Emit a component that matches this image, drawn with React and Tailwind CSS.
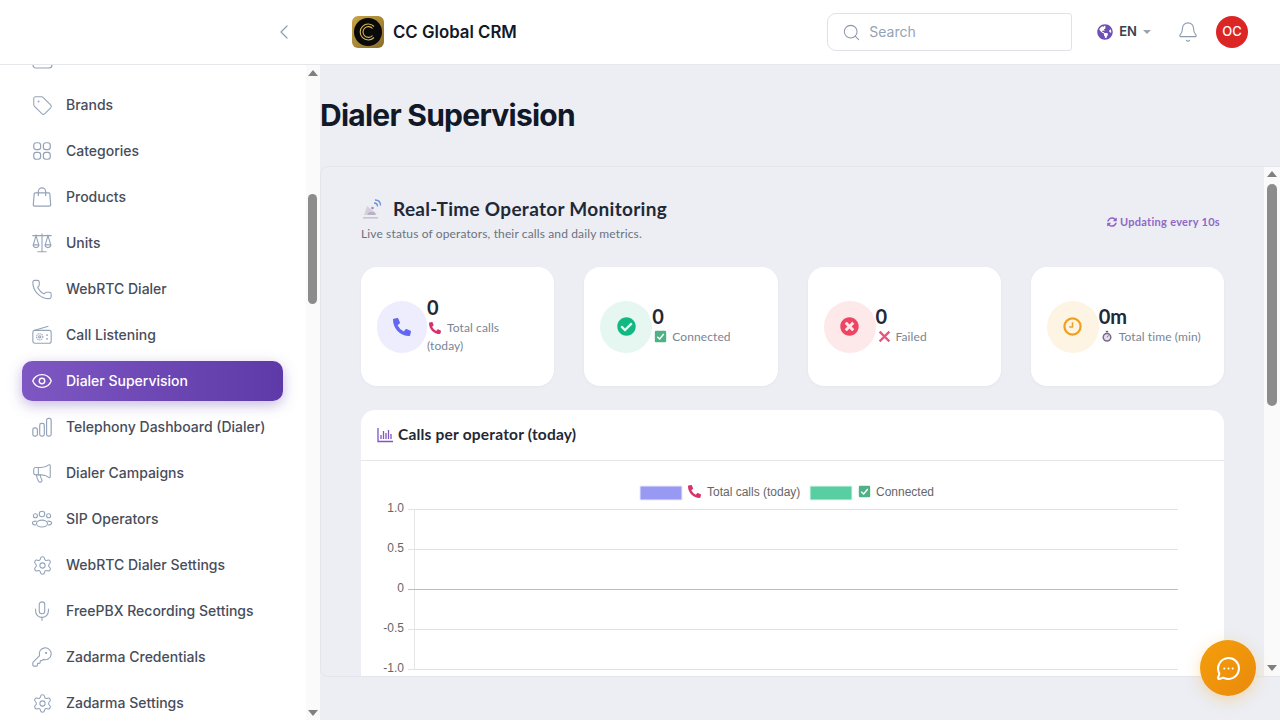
import { Bell, ChevronLeft, Eye, KeyRound, Megaphone, MessageCircleMore, Mic, Phone, Search, Settings, Tag } from 'lucide-react';
import { FaCheckCircle, FaGlobeAmericas, FaPhoneAlt, FaSyncAlt, FaTimesCircle } from 'react-icons/fa';

const sans = 'font-["Inter","Liberation_Sans",sans-serif]';

function GridIcon(props) {
  return (
    <svg viewBox="0 0 24 24" fill="none" stroke="currentColor" strokeWidth="1.3" {...props}>
      <rect x="3" y="3" width="7.5" height="7.5" rx="2.6" />
      <rect x="13.5" y="3" width="7.5" height="7.5" rx="2.6" />
      <rect x="3" y="13.5" width="7.5" height="7.5" rx="2.6" />
      <rect x="13.5" y="13.5" width="7.5" height="7.5" rx="2.6" />
    </svg>
  );
}

function BagIcon(props) {
  return (
    <svg viewBox="0 0 24 24" fill="none" stroke="currentColor" strokeWidth="1.3" {...props}>
      <path d="M4.5 7.5h15a1 1 0 0 1 1 1l1 12a1.5 1.5 0 0 1-1.5 1.5H4a1.5 1.5 0 0 1-1.5-1.5l1-12a1 1 0 0 1 1-1Z" />
      <path d="M8 11V6a4 4 0 0 1 8 0v5" />
    </svg>
  );
}

function BalanceIcon(props) {
  return (
    <svg viewBox="0 0 24 24" fill="none" stroke="currentColor" strokeWidth="1.2" {...props}>
      <path d="M1.5 4h21M12 1.5v20M7 21.5h10" />
      <path d="M5.5 4 2.5 14h6ZM18.5 4l-3 10h6Z" />
      <path d="M2.5 14a3 3 0 0 0 6 0M15.5 14a3 3 0 0 0 6 0" />
    </svg>
  );
}

function RadioIcon(props) {
  return (
    <svg viewBox="0 0 24 24" fill="none" stroke="currentColor" strokeWidth="1.2" {...props}>
      <rect x="2" y="7" width="20" height="14" rx="2.2" />
      <path d="M3 7 19 2.5" />
      <circle cx="9.5" cy="14" r="3.4" strokeDasharray="1.4 .8" />
      <circle cx="9.5" cy="14" r="1.2" />
      <path d="M17.5 11.5v1.4M17.5 15.5v1.4" strokeWidth="2" />
    </svg>
  );
}

function BarsIcon(props) {
  return (
    <svg viewBox="0 0 24 24" fill="none" stroke="currentColor" strokeWidth="1.3" {...props}>
      <rect x="2" y="13" width="5" height="9" rx="2" />
      <rect x="9.5" y="8" width="5" height="14" rx="2" />
      <rect x="17" y="2.5" width="5" height="19.5" rx="2" />
    </svg>
  );
}

function PeopleIcon(props) {
  return (
    <svg viewBox="0 0 24 24" fill="none" stroke="currentColor" strokeWidth="1.2" {...props}>
      <circle cx="12" cy="6.5" r="3" />
      <circle cx="4.8" cy="8.5" r="2.2" />
      <circle cx="19.2" cy="8.5" r="2.2" />
      <ellipse cx="12" cy="17" rx="6" ry="3.8" />
      <path d="M6.2 14.4C3.6 14 1.5 15 1.5 16.4s1.7 2.3 4 2.2M17.8 14.4c2.6-.4 4.7.6 4.7 2s-1.7 2.3-4 2.2" />
    </svg>
  );
}

function CheckEmoji({ className }) {
  return (
    <svg viewBox="0 0 16 16" className={className}>
      <rect x="1" y="1" width="14" height="14" rx="1.5" fill="#4fb286" />
      <path d="M4 8.2 7 11l5-6" fill="none" stroke="#fff" strokeWidth="1.7" />
    </svg>
  );
}

function CrossEmoji({ className }) {
  return (
    <svg viewBox="0 0 16 16" className={className}>
      <path d="M2 2 14 14M14 2 2 14" stroke="#e8567f" strokeWidth="2.8" />
    </svg>
  );
}

function WatchEmoji({ className }) {
  return (
    <svg viewBox="0 0 16 16" className={className}>
      <rect x="6.4" y="0.5" width="3.2" height="2" fill="#6d5a7e" />
      <circle cx="8" cy="9" r="6" fill="#7b6a8c" />
      <circle cx="8" cy="9" r="4" fill="#e6dfea" />
      <path d="M8 9 10 6.5" stroke="#6d5a7e" strokeWidth="1.2" />
    </svg>
  );
}

function PhoneEmoji({ className }) {
  return <FaPhoneAlt className={`${className} text-[#d6336c]`} />;
}

function SatelliteEmoji() {
  return (
    <svg viewBox="0 0 22 22" className="w-[22px] h-[22px]">
      <path d="M3 17 6 8 16 16Z" fill="#d6cfdc" />
      <path d="M6 17h9l-2-3H8Z" fill="#b9b1c4" />
      <rect x="2" y="19" width="15" height="1.6" fill="#c8c3d2" />
      <path d="M13 5c2 0 3.5 1.5 3.5 3.5M14 2c3.4 0 5.5 2.2 5.5 5.5" fill="none" stroke="#6d8fd8" strokeWidth="1.3" />
      <circle cx="11.5" cy="10" r="1.3" fill="#a48cc0" />
    </svg>
  );
}

const NAV_ITEMS = [
  { label: 'Brands', icon: <Tag size={21} strokeWidth={1.2} /> },
  { label: 'Categories', icon: <GridIcon className="w-[22px] h-[22px]" /> },
  { label: 'Products', icon: <BagIcon className="w-[22px] h-[22px]" /> },
  { label: 'Units', icon: <BalanceIcon className="w-[22px] h-[22px]" /> },
  { label: 'WebRTC Dialer', icon: <Phone size={23} strokeWidth={1.2} /> },
  { label: 'Call Listening', icon: <RadioIcon className="w-[22px] h-[22px]" /> },
  { label: 'Dialer Supervision', icon: <Eye size={22} strokeWidth={1.5} />, active: true },
  { label: 'Telephony Dashboard (Dialer)', icon: <BarsIcon className="w-[22px] h-[22px]" /> },
  { label: 'Dialer Campaigns', icon: <Megaphone size={22} strokeWidth={1.2} /> },
  { label: 'SIP Operators', icon: <PeopleIcon className="w-[22px] h-[22px]" /> },
  { label: 'WebRTC Dialer Settings', icon: <Settings size={21} strokeWidth={1.2} /> },
  { label: 'FreePBX Recording Settings', icon: <Mic size={22} strokeWidth={1.2} /> },
  { label: 'Zadarma Credentials', icon: <KeyRound size={22} strokeWidth={1.2} /> },
  { label: 'Zadarma Settings', icon: <Settings size={21} strokeWidth={1.2} /> },
];

// la première carte a un rond un peu écrasé, comme sur la capture
const STATS = [
  { value: '0', label: 'Total calls (today)', circle: 'w-[50px] bg-[#eeedfd]', icon: <FaPhoneAlt className="w-[18px] h-[18px] text-[#6366f1]" />, emoji: <PhoneEmoji className="w-[12px] h-[12px] inline-block ml-[2px] mr-[6px] -mt-[2px]" /> },
  { value: '0', label: 'Connected', circle: 'w-[52px] bg-[#e6f6f1]', icon: <FaCheckCircle className="w-[19px] h-[19px] text-[#10b981]" />, emoji: <CheckEmoji className="w-[13px] h-[13px] inline-block ml-[2px] mr-[5px] -mt-[2px]" /> },
  { value: '0', label: 'Failed', circle: 'w-[52px] bg-[#fde8ea]', icon: <FaTimesCircle className="w-[19px] h-[19px] text-[#ef4565]" />, emoji: <CrossEmoji className="w-[13px] h-[13px] inline-block ml-[2px] mr-[5px] -mt-[2px]" /> },
  {
    value: '0m',
    label: 'Total time (min)',
    circle: 'w-[52px] bg-[#fdf4e3]',
    icon: (
      <svg viewBox="0 0 20 20" className="w-[19px] h-[19px]" fill="none" stroke="#f0a020">
        <circle cx="10" cy="10" r="8.5" strokeWidth="2.4" />
        <path d="M10 5.5V10.5H6.5" strokeWidth="1.6" />
      </svg>
    ),
    emoji: <WatchEmoji className="w-[12px] h-[13px] inline-block ml-[2px] mr-[6px] -mt-[2px]" />,
  },
];

function ArrowUp() {
  return <div className="w-0 h-0 border-x-[5px] border-x-transparent border-b-[6px] border-b-[#808080]" />;
}

function ArrowDown() {
  return <div className="w-0 h-0 border-x-[5px] border-x-transparent border-t-[6px] border-t-[#808080]" />;
}

function Header() {
  return (
    <header className={`h-[65px] shrink-0 flex items-center bg-white border-b border-[#e5e7eb] ${sans}`}>
      <div className="w-[352px] shrink-0 flex justify-end pr-[56px] text-[#8fa0b5]">
        <ChevronLeft size={24} strokeWidth={1.3} />
      </div>
      <div className="w-[32px] h-[32px] rounded-[6px] bg-gradient-to-br from-[#c9a648] to-[#8a6d2a] flex items-center justify-center">
        <svg viewBox="0 0 28 28" className="w-[28px] h-[28px]">
          <circle cx="14" cy="14" r="14" fill="#0a0a0a" />
          <path d="M20 8.5A8 8 0 1 0 20 19.5" fill="none" stroke="#d9b95c" strokeWidth="1.1" />
          <path d="M18.5 10.5A5.4 5.4 0 1 0 18.5 17.5" fill="none" stroke="#d9b95c" strokeWidth="1.1" />
        </svg>
      </div>
      <span className="ml-[9px] pt-[1px] text-[16.8px] font-semibold text-[#111827]">CC Global CRM</span>
      <div className="ml-auto w-[245px] h-[38px] rounded-l-[9px] rounded-r-[3px] border border-[#dfe3e8] flex items-center pl-[14px] text-[#94a3b8]">
        <Search size={19} strokeWidth={1.3} className="text-[#8b98a8]" />
        <span className="ml-[8px] pb-[1px] text-[14px]">Search</span>
      </div>
      <div className="ml-[25px] flex items-center">
        <FaGlobeAmericas className="w-[16px] h-[16px] text-[#6f51b5]" />
        <span className="ml-[6px] text-[13px] font-semibold text-[#374151]">EN</span>
        <div className="ml-[6px] w-0 h-0 border-x-[4px] border-x-transparent border-t-[4px] border-t-[#9ca3af]" />
      </div>
      <Bell size={22} strokeWidth={1.2} className="ml-[26px] text-[#8c9aaa]" />
      <div className="ml-[17px] mr-[32px] w-[32px] h-[32px] rounded-full bg-[#dc2626] flex items-center justify-center text-white text-[13px] font-medium">OC</div>
    </header>
  );
}

function Sidebar() {
  return (
    <aside className={`w-[320px] shrink-0 bg-white flex overflow-hidden ${sans}`}>
      <nav className="flex-1 flex flex-col gap-[6px] pl-[22px] pr-[23px] -mt-[26px]">
        <div className="h-[40px] shrink-0 flex items-center pl-[10px] text-[#94a3b8]">
          <svg viewBox="0 0 22 22" className="w-[22px] h-[22px]" fill="none" stroke="currentColor" strokeWidth="1.2">
            <rect x="1" y="1" width="19" height="19" rx="3" />
          </svg>
        </div>
        {NAV_ITEMS.map((item) => (
          <div
            key={item.label}
            className={`h-[40px] shrink-0 flex items-center pl-[9px] rounded-[10px] text-[14px] font-medium ${
              item.active
                ? 'bg-gradient-to-r from-[#7e57c2] to-[#5e3aa8] text-white shadow-[0_4px_14px_rgba(94,58,168,0.35)]'
                : 'text-[#474d5b]'
            }`}
          >
            <span className={`w-[22px] flex justify-center ${item.active ? 'text-white' : 'text-[#94a3b8]'}`}>{item.icon}</span>
            <span className="ml-[13px] pb-[2px]">{item.label}</span>
          </div>
        ))}
      </nav>
      <div className="w-[14px] shrink-0 bg-[#fafafa] flex flex-col items-center pt-[5px] pb-[4px] pr-[1px]">
        <ArrowUp />
        <div className="mt-[118px] w-[9px] h-[110px] rounded-full bg-[#8c8c8c]" />
        <div className="flex-1" />
        <ArrowDown />
      </div>
    </aside>
  );
}

function StatCard({ stat }) {
  return (
    <div className="h-[119px] rounded-[16px] bg-white shadow-[0_1px_3px_rgba(30,40,80,0.04)] px-[16px] flex items-center">
      <div className={`h-[52px] shrink-0 rounded-full flex items-center justify-center ${stat.circle}`}>{stat.icon}</div>
      <div className="min-w-0 pb-[3px]">
        <div className="text-[20px] leading-[24px] font-bold text-[#1f2937]">{stat.value}</div>
        <div className="text-[12px] leading-[18px] tracking-[0.1px] text-[#7b8494]">
          {stat.emoji}
          {stat.label}
        </div>
      </div>
    </div>
  );
}

function Chart() {
  const rows = [
    { y: 509, label: '1.0' },
    { y: 549, label: '0.5' },
    { y: 589, label: '0', zero: true },
    { y: 629, label: '-0.5' },
    { y: 669, label: '-1.0' },
  ];
  return (
    <svg viewBox="361 461 863 216" className="w-full h-[216px] block font-['Liberation_Sans',sans-serif]">
      <rect x="640" y="486" width="42" height="14" fill="#9799f3" stroke="#eceafc" />
      <rect x="810" y="486" width="42" height="14" fill="#58cfa2" stroke="#e3f5ef" />
      <foreignObject x="688" y="485" width="14" height="14">
        <PhoneEmoji className="w-[13px] h-[13px]" />
      </foreignObject>
      <text x="707" y="496" fontSize="12" fill="#666">Total calls (today)</text>
      <foreignObject x="858" y="485" width="14" height="14">
        <CheckEmoji className="w-[13px] h-[13px]" />
      </foreignObject>
      <text x="876" y="496" fontSize="12" fill="#666">Connected</text>
      <line x1="414.5" y1="509" x2="414.5" y2="669" stroke="#e5e5e5" />
      {rows.map((row) => (
        <g key={row.label}>
          <line x1="408" y1={row.y + 0.5} x2="1178" y2={row.y + 0.5} stroke={row.zero ? '#bdbdbd' : '#e2e2e2'} />
          <text x="404" y={row.y + 3} fontSize="12" fill="#666" textAnchor="end">{row.label}</text>
        </g>
      ))}
    </svg>
  );
}

export default function App() {
  return (
    <div className="h-screen flex flex-col overflow-hidden bg-[#eceef4]">
      <Header />
      <div className="flex-1 flex min-h-0 relative">
        <Sidebar />
        <main className="flex-1 min-w-0 flex flex-col">
          <h1 className={`h-[101px] shrink-0 flex items-center text-[30px] font-bold tracking-[-0.75px] text-[#111827] ${sans}`}>Dialer Supervision</h1>
          <section className="h-[511px] shrink-0 flex rounded-l-[8px] border border-r-0 border-[#e4e6ed] overflow-hidden font-['Lato',sans-serif]">
            <div className="flex-1 min-w-0 pl-[40px] pr-[40px] pt-[30px]">
              <div className="flex items-start justify-between">
                <div>
                  <div className="flex items-center gap-[10px] h-[24px]">
                    <SatelliteEmoji />
                    <span className="text-[19px] tracking-[0.3px] font-bold text-[#1f2937]">Real-Time Operator Monitoring</span>
                  </div>
                  <p className="mt-[5px] text-[12px] leading-[16px] tracking-[0.13px] text-[#6b7280]">Live status of operators, their calls and daily metrics.</p>
                </div>
                <div className="mt-[17px] mr-[4px] flex items-center gap-[3px] text-[11px] tracking-[0.3px] font-bold text-[#9067c6]">
                  <FaSyncAlt className="w-[10px] h-[10px]" />
                  Updating every 10s
                </div>
              </div>
              <div className="mt-[25px] grid grid-cols-4 gap-[30px]">
                {STATS.map((stat) => (
                  <StatCard key={stat.label} stat={stat} />
                ))}
              </div>
              <div className="mt-[24px] rounded-t-[14px] bg-white">
                <div className="h-[51px] flex items-center gap-[5px] pl-[16px] border-b border-[#e5e7eb]">
                  <svg viewBox="0 0 16 16" className="w-[16px] h-[16px]" fill="none" stroke="#7e57c2" strokeWidth="1.3">
                    <path d="M1 1v13.5h15M4 12V8M6.5 12V4M9 12V6M11.5 12V3M14 12V7" />
                  </svg>
                  <span className="text-[15.5px] tracking-[0.2px] font-bold text-[#1f2937]">Calls per operator (today)</span>
                </div>
                <Chart />
              </div>
            </div>
            <div className="w-[16px] shrink-0 bg-[#fafafa] flex flex-col items-center pt-[4px] pb-[5px]">
              <ArrowUp />
              <div className="mt-[7px] w-[10px] h-[222px] rounded-full bg-[#8c8c8c]" />
              <div className="flex-1" />
              <ArrowDown />
            </div>
          </section>
        </main>
        <div className="absolute right-[24px] bottom-[24px] w-[56px] h-[56px] rounded-full bg-gradient-to-br from-[#f59e0b] to-[#e98a0c] shadow-[0_4px_16px_rgba(245,158,11,0.3)] flex items-center justify-center text-white">
          <MessageCircleMore size={25} strokeWidth={2} />
        </div>
      </div>
    </div>
  );
}
